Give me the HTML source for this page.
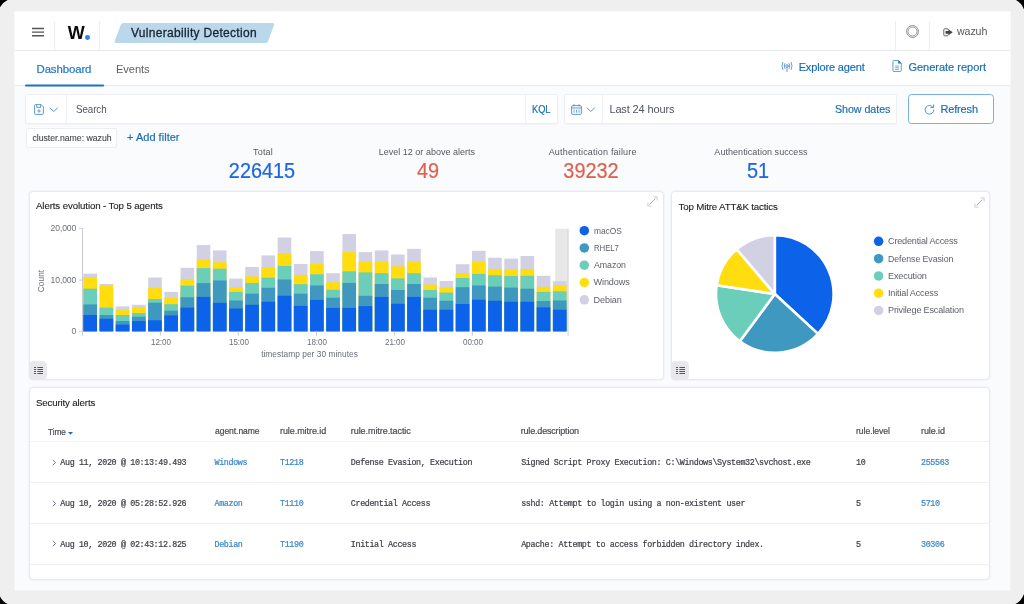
<!DOCTYPE html>
<html><head><meta charset="utf-8"><title>Wazuh - Vulnerability Detection</title>
<style>
html,body{margin:0;padding:0;background:#000;}
body{width:1024px;height:604px;position:relative;overflow:hidden;font-family:"Liberation Sans",sans-serif;}
.frame{position:absolute;left:0;top:0;width:1024px;height:604px;background:#efefef;overflow:hidden;will-change:transform;}
.t{position:absolute;white-space:nowrap;height:20px;}
.abs{position:absolute;}
.panel{position:absolute;background:#fff;border:1px solid #e7eaf2;border-radius:4px;box-sizing:border-box;box-shadow:0 0 0 1px #f2f4f9;}
.box{position:absolute;background:#fff;border:1px solid #edeff4;box-shadow:0 1px 1px rgba(150,160,190,0.08);box-sizing:border-box;border-radius:2px;}
svg{position:absolute;overflow:visible;}
</style></head><body>
<div class="frame">

<svg style="left:0;top:0" width="1024" height="604"><rect x="14.5" y="11.5" width="995.9" height="579.1" fill="#fafbfd"/><rect x="14.5" y="11.5" width="995.9" height="73" fill="#fff"/></svg>
<div class="abs" style="left:15px;top:12px;width:995px;height:578px;background:#fafbfd;"></div>
<div class="abs" style="left:15px;top:12px;width:995px;height:38px;background:#fff;border-bottom:1px solid #e8e9ec;"></div>
<div class="abs" style="left:15px;top:51px;width:995px;height:34px;background:#fff;border-bottom:1px solid #e9eaec;"></div>
<div class="abs" style="left:53.7px;top:21px;width:1px;height:29px;background:#edeef2;"></div>
<div class="abs" style="left:98.8px;top:21px;width:1px;height:29px;background:#edeef2;"></div>
<div class="abs" style="left:894.8px;top:21px;width:1px;height:29px;background:#edeef2;"></div>
<div class="abs" style="left:929px;top:21px;width:1px;height:29px;background:#edeef2;"></div>
<svg style="left:32px;top:27px" width="12" height="10" viewBox="0 0 12 10"><path d="M0 1.5H12M0 5.1H12M0 8.7H12" stroke="#555" stroke-width="1.45" fill="none"/></svg>
<div class="t" style="left:67.7px;top:22.50px;font:700 18px/20px 'Liberation Sans', sans-serif;color:#0a0a0a;">W</div>
<div class="abs" style="left:85.2px;top:35.1px;width:4.8px;height:4.8px;border-radius:50%;background:#2f7df6;"></div>
<svg style="left:114px;top:22.7px" width="162" height="20" viewBox="0 0 162 20"><path d="M6.9 1.5Q7.4 0 9.2 0H158.4Q160.8 0 160 2.2L154 18.5Q153.4 20 151.6 20H2.4Q0 20 0.8 17.8Z" fill="#b9d8ec"/></svg>
<div class="t" style="left:131px;top:23.00px;font:400 12px/20px 'Liberation Sans', sans-serif;color:#1b2430;-webkit-text-stroke:0.3px #1b2430;letter-spacing:0.302px;">Vulnerability Detection</div>
<svg style="left:905.5px;top:25.1px" width="13" height="13" viewBox="0 0 13 13"><circle cx="6.5" cy="6.5" r="5.9" fill="none" stroke="#6a6a6a" stroke-width="0.75"/><circle cx="6.5" cy="6.5" r="4.5" fill="none" stroke="#7a7a7a" stroke-width="0.75"/></svg>
<svg style="left:943.4px;top:28.4px" width="10" height="9" viewBox="0 0 10 9"><path d="M5.2 2.2V1.7Q5.2 0.8 4.3 0.8H1.7Q0.8 0.8 0.8 1.7V6.9Q0.8 7.8 1.7 7.8H4.3Q5.2 7.8 5.2 6.9V6.4" fill="none" stroke="#666" stroke-width="1"/><path d="M2.5 2.9H5.5V1.3L9.7 4.3L5.5 7.3V5.7H2.5Z" fill="#454545"/></svg>
<div class="t" style="left:956.8px;top:21.30px;font:400 11px/20px 'Liberation Sans', sans-serif;color:#555;transform:scaleX(0.9626);transform-origin:0 50%;letter-spacing:-0.080px;">wazuh</div>
<div class="t" style="left:36.5px;top:58.50px;font:400 11.4px/20px 'Liberation Sans', sans-serif;color:#1a75c6;-webkit-text-stroke:0.18px;letter-spacing:-0.096px;">Dashboard</div>
<svg style="left:0;top:0" width="1024" height="604"><rect x="25" y="84.5" width="79.2" height="2.1" rx="1" fill="#1c74bd"/></svg>
<div class="t" style="left:115.8px;top:58.50px;font:400 11.4px/20px 'Liberation Sans', sans-serif;color:#5e5f62;transform:scaleX(0.9782);transform-origin:0 50%;letter-spacing:-0.080px;">Events</div>
<svg style="left:781px;top:61px" width="12" height="12" viewBox="0 0 12 12" fill="none" stroke="#4c8fcb" stroke-width="0.85" stroke-linecap="round"><circle cx="6" cy="5" r="1.3"/><path d="M6 6.4V10.6"/><path d="M3.8 2.6Q2.6 5 3.8 7.4M8.2 2.6Q9.4 5 8.2 7.4"/><path d="M1.8 1.4Q0 5 1.8 8.6M10.2 1.4Q12 5 10.2 8.6"/></svg>
<div class="t" style="left:798.7px;top:57.00px;font:400 11px/20px 'Liberation Sans', sans-serif;color:#1a6db5;-webkit-text-stroke:0.18px;letter-spacing:-0.157px;">Explore agent</div>
<svg style="left:891.8px;top:60.3px" width="10.2" height="12" viewBox="0 0 11 13" fill="none" stroke="#4c8fcb" stroke-width="0.95"><path d="M1 1.4Q1 0.6 1.8 0.6H7L10 3.6V11.6Q10 12.4 9.2 12.4H1.8Q1 12.4 1 11.6Z"/><path d="M7 0.6V3.6H10Z" fill="#1a6db5" stroke="#1a6db5" stroke-width="0.5"/><path d="M3.4 6.6H7.6M3.4 8.4H7.6M3.4 10.2H7.6" stroke-width="0.8"/></svg>
<div class="t" style="left:908.4px;top:57.00px;font:400 11px/20px 'Liberation Sans', sans-serif;color:#1a6db5;-webkit-text-stroke:0.18px;letter-spacing:-0.004px;">Generate report</div>
<div class="box" style="left:25px;top:94px;width:532.5px;height:29.5px;"></div>
<div class="abs" style="left:66px;top:95px;width:1px;height:27.5px;background:#eef0f4;"></div>
<div class="abs" style="left:525px;top:95px;width:1px;height:27.5px;background:#eef0f4;"></div>
<svg style="left:34.4px;top:104.2px" width="10" height="11" viewBox="0 0 10 11" fill="none" stroke="#4c8fcb" stroke-width="0.9"><path d="M1.4 0.6H7.2L9.4 2.8V9.6Q9.4 10.4 8.6 10.4H1.4Q0.6 10.4 0.6 9.6V1.4Q0.6 0.6 1.4 0.6Z"/><path d="M2.8 0.8V3.4H6.6V0.8"/><circle cx="5" cy="7" r="1.1"/></svg>
<svg style="left:49px;top:107.4px" width="9.4" height="5.6" viewBox="0 0 10 6" fill="none" stroke="#4c8fcb" stroke-width="1"><path d="M0.6 0.8L5 4.8L9.4 0.8"/></svg>
<div class="t" style="left:75.6px;top:99.00px;font:400 10.8px/20px 'Liberation Sans', sans-serif;color:#50545b;transform:scaleX(0.9048);transform-origin:0 50%;letter-spacing:-0.080px;">Search</div>
<div class="t" style="left:532px;top:99.20px;font:400 11px/20px 'Liberation Sans', sans-serif;color:#1a6db5;-webkit-text-stroke:0.2px;transform:scaleX(0.84);transform-origin:0 50%;">KQL</div>
<div class="box" style="left:564px;top:94px;width:333px;height:29.5px;"></div>
<div class="abs" style="left:602px;top:95px;width:1px;height:27.5px;background:#eef0f4;"></div>
<svg style="left:571px;top:103.7px" width="11" height="11" viewBox="0 0 11 11" fill="none" stroke="#4c8fcb" stroke-width="0.9"><rect x="0.6" y="1.6" width="9.8" height="8.8" rx="1.2"/><path d="M0.6 4H10.4"/><path d="M3 0.2V2.4M8 0.2V2.4"/><path d="M3 5.6V8.8M5.5 5.6V8.8M8 5.6V8.8" stroke-width="0.8"/></svg>
<svg style="left:586px;top:107.4px" width="9.4" height="5.6" viewBox="0 0 10 6" fill="none" stroke="#4c8fcb" stroke-width="1"><path d="M0.6 0.8L5 4.8L9.4 0.8"/></svg>
<div class="t" style="left:609.4px;top:99.00px;font:400 11px/20px 'Liberation Sans', sans-serif;color:#50545b;letter-spacing:-0.130px;">Last 24 hours</div>
<div class="t" style="left:834.6px;top:99.00px;font:400 11px/20px 'Liberation Sans', sans-serif;color:#1a6db5;-webkit-text-stroke:0.18px;transform:scaleX(0.9760);transform-origin:0 50%;letter-spacing:-0.080px;">Show dates</div>
<div class="abs" style="left:908px;top:94px;width:85.5px;height:29.5px;box-sizing:border-box;border:1px solid #79b0dd;border-radius:3.5px;background:#fff;"></div>
<svg style="left:924px;top:103.5px" width="11" height="11" viewBox="0 0 11 11" fill="none" stroke="#4c8fcb" stroke-width="0.95" stroke-linecap="round"><path d="M9.2 3.4A4.4 4.4 0 1 0 9.9 5.8"/><path d="M9.6 0.8V3.6H6.8"/></svg>
<div class="t" style="left:940.5px;top:99.00px;font:400 11px/20px 'Liberation Sans', sans-serif;color:#1a6db5;-webkit-text-stroke:0.18px;letter-spacing:-0.170px;">Refresh</div>
<div class="abs" style="left:26px;top:127.5px;width:90.5px;height:20px;box-sizing:border-box;border:1px solid #eceef3;border-radius:2px;background:#fff;"></div>
<div class="t" style="left:32.4px;top:127.50px;font:400 8.7px/20px 'Liberation Sans', sans-serif;color:#45494f;-webkit-text-stroke:0.12px;letter-spacing:-0.000px;">cluster.name: wazuh</div>
<div class="t" style="left:127px;top:126.80px;font:400 11px/20px 'Liberation Sans', sans-serif;color:#1a6db5;-webkit-text-stroke:0.18px;letter-spacing:0.020px;">+ Add filter</div>
<div class="t" style="left:112.89999999999998px;width:300px;text-align:center;top:142.00px;font:400 9px/20px 'Liberation Sans', sans-serif;color:#55595f;letter-spacing:0.172px;text-indent:0.172px;">Total</div>
<div class="t" style="left:112.19999999999999px;width:300px;text-align:center;top:156.45px;height:30px;font:400 21.6px/30px 'Liberation Sans',sans-serif;color:#1f66e6;transform:scaleX(0.92);-webkit-text-stroke:0.22px #1f66e6;">226415</div>
<div class="t" style="left:276.9px;width:300px;text-align:center;top:142.00px;font:400 9px/20px 'Liberation Sans', sans-serif;color:#55595f;letter-spacing:0.006px;text-indent:0.006px;">Level 12 or above alerts</div>
<div class="t" style="left:277.5px;width:300px;text-align:center;top:156.45px;height:30px;font:400 21.6px/30px 'Liberation Sans',sans-serif;color:#e0604f;transform:scaleX(0.92);-webkit-text-stroke:0.22px #e0604f;">49</div>
<div class="t" style="left:442.6px;width:300px;text-align:center;top:142.00px;font:400 9px/20px 'Liberation Sans', sans-serif;color:#55595f;letter-spacing:0.178px;text-indent:0.178px;">Authentication failure</div>
<div class="t" style="left:441px;width:300px;text-align:center;top:156.45px;height:30px;font:400 21.6px/30px 'Liberation Sans',sans-serif;color:#e0604f;transform:scaleX(0.92);-webkit-text-stroke:0.22px #e0604f;">39232</div>
<div class="t" style="left:610.9px;width:300px;text-align:center;top:142.00px;font:400 9px/20px 'Liberation Sans', sans-serif;color:#55595f;letter-spacing:0.050px;text-indent:0.050px;">Authentication success</div>
<div class="t" style="left:607.5px;width:300px;text-align:center;top:156.45px;height:30px;font:400 21.6px/30px 'Liberation Sans',sans-serif;color:#1f66e6;transform:scaleX(0.92);-webkit-text-stroke:0.22px #1f66e6;">51</div>
<div class="panel" style="left:29px;top:190.5px;width:635px;height:189px;"></div>
<div class="panel" style="left:670.5px;top:190.5px;width:319.5px;height:189px;"></div>
<div class="panel" style="left:29px;top:386.5px;width:961px;height:193px;"></div>
<div class="t" style="left:36px;top:196.40px;font:400 9.7px/20px 'Liberation Sans', sans-serif;color:#1c1e22;-webkit-text-stroke:0.12px #1c1e22;letter-spacing:-0.110px;">Alerts evolution - Top 5 agents</div>
<div class="t" style="left:678.6px;top:196.90px;font:400 9.7px/20px 'Liberation Sans', sans-serif;color:#1c1e22;-webkit-text-stroke:0.12px #1c1e22;letter-spacing:-0.153px;">Top Mitre ATT&amp;K tactics</div>
<div class="t" style="left:36px;top:393.20px;font:400 9.7px/20px 'Liberation Sans', sans-serif;color:#1c1e22;-webkit-text-stroke:0.12px #1c1e22;letter-spacing:-0.147px;">Security alerts</div>
<svg style="left:647.3px;top:196px" width="11" height="11" viewBox="0 0 11 11" fill="none"><path d="M2.6 8.4L8.4 2.6" stroke="#9b9ea6" stroke-width="0.9"/><path d="M6.6 0.9H10.1V4.4M0.9 6.6V10.1H4.4" stroke="#c0c3ca" stroke-width="0.85"/></svg>
<svg style="left:974px;top:197.4px" width="11" height="11" viewBox="0 0 11 11" fill="none"><path d="M2.6 8.4L8.4 2.6" stroke="#9b9ea6" stroke-width="0.9"/><path d="M6.6 0.9H10.1V4.4M0.9 6.6V10.1H4.4" stroke="#c0c3ca" stroke-width="0.85"/></svg>
<div class="abs" style="left:29.1px;top:361.3px;width:18px;height:18.4px;background:#e9e9eb;border-radius:4.5px;"></div>
<svg style="left:34px;top:367px" width="9" height="8" viewBox="0 0 9 8"><path d="M0 0.5H2M3.4 0.5H9M0 2.5H2M3.4 2.5H9M0 4.5H2M3.4 4.5H9M0 6.5H2M3.4 6.5H9" stroke="#55555a" stroke-width="1" fill="none"/></svg>
<div class="abs" style="left:671.1px;top:361.3px;width:18px;height:18.4px;background:#e9e9eb;border-radius:4.5px;"></div>
<svg style="left:676px;top:367px" width="9" height="8" viewBox="0 0 9 8"><path d="M0 0.5H2M3.4 0.5H9M0 2.5H2M3.4 2.5H9M0 4.5H2M3.4 4.5H9M0 6.5H2M3.4 6.5H9" stroke="#55555a" stroke-width="1" fill="none"/></svg>
<svg style="left:0;top:0" width="1024" height="604" viewBox="0 0 1024 604" shape-rendering="auto"><rect x="555.2" y="228.8" width="12.6" height="102.5" fill="#e7e7e7"/><rect x="567.6" y="228.8" width="0.9" height="107" fill="#c9c9cd"/><rect x="83.40" y="273.60" width="13.6" height="57.70" fill="#d1d1e3"/><rect x="83.40" y="277.50" width="13.6" height="53.80" fill="#ffdd0f"/><rect x="83.40" y="288.70" width="13.6" height="42.60" fill="#6bceba"/><rect x="83.40" y="304.40" width="13.6" height="26.90" fill="#3f98bf"/><rect x="83.40" y="315.00" width="13.6" height="16.30" fill="#0d62ea"/><rect x="99.59" y="284.00" width="13.6" height="47.30" fill="#d1d1e3"/><rect x="99.59" y="285.50" width="13.6" height="45.80" fill="#ffdd0f"/><rect x="99.59" y="307.60" width="13.6" height="23.70" fill="#6bceba"/><rect x="99.59" y="315.00" width="13.6" height="16.30" fill="#3f98bf"/><rect x="99.59" y="318.80" width="13.6" height="12.50" fill="#0d62ea"/><rect x="115.78" y="306.40" width="13.6" height="24.90" fill="#d1d1e3"/><rect x="115.78" y="310.20" width="13.6" height="21.10" fill="#ffdd0f"/><rect x="115.78" y="315.00" width="13.6" height="16.30" fill="#6bceba"/><rect x="115.78" y="321.00" width="13.6" height="10.30" fill="#3f98bf"/><rect x="115.78" y="324.60" width="13.6" height="6.70" fill="#0d62ea"/><rect x="131.97" y="304.80" width="13.6" height="26.50" fill="#d1d1e3"/><rect x="131.97" y="307.20" width="13.6" height="24.10" fill="#ffdd0f"/><rect x="131.97" y="313.00" width="13.6" height="18.30" fill="#6bceba"/><rect x="131.97" y="316.70" width="13.6" height="14.60" fill="#3f98bf"/><rect x="131.97" y="321.00" width="13.6" height="10.30" fill="#0d62ea"/><rect x="148.16" y="277.50" width="13.6" height="53.80" fill="#d1d1e3"/><rect x="148.16" y="288.10" width="13.6" height="43.20" fill="#ffdd0f"/><rect x="148.16" y="299.00" width="13.6" height="32.30" fill="#6bceba"/><rect x="148.16" y="302.70" width="13.6" height="28.60" fill="#3f98bf"/><rect x="148.16" y="320.30" width="13.6" height="11.00" fill="#0d62ea"/><rect x="164.35" y="291.90" width="13.6" height="39.40" fill="#d1d1e3"/><rect x="164.35" y="297.70" width="13.6" height="33.60" fill="#ffdd0f"/><rect x="164.35" y="304.20" width="13.6" height="27.10" fill="#6bceba"/><rect x="164.35" y="310.70" width="13.6" height="20.60" fill="#3f98bf"/><rect x="164.35" y="315.40" width="13.6" height="15.90" fill="#0d62ea"/><rect x="180.54" y="267.80" width="13.6" height="63.50" fill="#d1d1e3"/><rect x="180.54" y="279.20" width="13.6" height="52.10" fill="#ffdd0f"/><rect x="180.54" y="285.70" width="13.6" height="45.60" fill="#6bceba"/><rect x="180.54" y="297.30" width="13.6" height="34.00" fill="#3f98bf"/><rect x="180.54" y="307.60" width="13.6" height="23.70" fill="#0d62ea"/><rect x="196.73" y="245.00" width="13.6" height="86.30" fill="#d1d1e3"/><rect x="196.73" y="259.90" width="13.6" height="71.40" fill="#ffdd0f"/><rect x="196.73" y="268.10" width="13.6" height="63.20" fill="#6bceba"/><rect x="196.73" y="283.10" width="13.6" height="48.20" fill="#3f98bf"/><rect x="196.73" y="296.90" width="13.6" height="34.40" fill="#0d62ea"/><rect x="212.92" y="250.40" width="13.6" height="80.90" fill="#d1d1e3"/><rect x="212.92" y="262.20" width="13.6" height="69.10" fill="#ffdd0f"/><rect x="212.92" y="268.70" width="13.6" height="62.60" fill="#6bceba"/><rect x="212.92" y="280.50" width="13.6" height="50.80" fill="#3f98bf"/><rect x="212.92" y="302.90" width="13.6" height="28.40" fill="#0d62ea"/><rect x="229.11" y="278.60" width="13.6" height="52.70" fill="#d1d1e3"/><rect x="229.11" y="287.60" width="13.6" height="43.70" fill="#ffdd0f"/><rect x="229.11" y="291.90" width="13.6" height="39.40" fill="#6bceba"/><rect x="229.11" y="300.50" width="13.6" height="30.80" fill="#3f98bf"/><rect x="229.11" y="308.50" width="13.6" height="22.80" fill="#0d62ea"/><rect x="245.30" y="267.00" width="13.6" height="64.30" fill="#d1d1e3"/><rect x="245.30" y="276.40" width="13.6" height="54.90" fill="#ffdd0f"/><rect x="245.30" y="282.90" width="13.6" height="48.40" fill="#6bceba"/><rect x="245.30" y="293.70" width="13.6" height="37.60" fill="#3f98bf"/><rect x="245.30" y="304.80" width="13.6" height="26.50" fill="#0d62ea"/><rect x="261.49" y="255.40" width="13.6" height="75.90" fill="#d1d1e3"/><rect x="261.49" y="267.60" width="13.6" height="63.70" fill="#ffdd0f"/><rect x="261.49" y="277.70" width="13.6" height="53.60" fill="#6bceba"/><rect x="261.49" y="287.80" width="13.6" height="43.50" fill="#3f98bf"/><rect x="261.49" y="301.80" width="13.6" height="29.50" fill="#0d62ea"/><rect x="277.68" y="237.50" width="13.6" height="93.80" fill="#d1d1e3"/><rect x="277.68" y="253.20" width="13.6" height="78.10" fill="#ffdd0f"/><rect x="277.68" y="265.90" width="13.6" height="65.40" fill="#6bceba"/><rect x="277.68" y="279.50" width="13.6" height="51.80" fill="#3f98bf"/><rect x="277.68" y="295.80" width="13.6" height="35.50" fill="#0d62ea"/><rect x="293.87" y="264.00" width="13.6" height="67.30" fill="#d1d1e3"/><rect x="293.87" y="274.90" width="13.6" height="56.40" fill="#ffdd0f"/><rect x="293.87" y="284.20" width="13.6" height="47.10" fill="#6bceba"/><rect x="293.87" y="293.70" width="13.6" height="37.60" fill="#3f98bf"/><rect x="293.87" y="305.90" width="13.6" height="25.40" fill="#0d62ea"/><rect x="310.06" y="251.10" width="13.6" height="80.20" fill="#d1d1e3"/><rect x="310.06" y="263.70" width="13.6" height="67.60" fill="#ffdd0f"/><rect x="310.06" y="274.30" width="13.6" height="57.00" fill="#6bceba"/><rect x="310.06" y="285.50" width="13.6" height="45.80" fill="#3f98bf"/><rect x="310.06" y="299.90" width="13.6" height="31.40" fill="#0d62ea"/><rect x="326.25" y="273.20" width="13.6" height="58.10" fill="#d1d1e3"/><rect x="326.25" y="282.30" width="13.6" height="49.00" fill="#ffdd0f"/><rect x="326.25" y="289.80" width="13.6" height="41.50" fill="#6bceba"/><rect x="326.25" y="297.70" width="13.6" height="33.60" fill="#3f98bf"/><rect x="326.25" y="307.90" width="13.6" height="23.40" fill="#0d62ea"/><rect x="342.44" y="234.10" width="13.6" height="97.20" fill="#d1d1e3"/><rect x="342.44" y="252.10" width="13.6" height="79.20" fill="#ffdd0f"/><rect x="342.44" y="271.30" width="13.6" height="60.00" fill="#6bceba"/><rect x="342.44" y="282.90" width="13.6" height="48.40" fill="#3f98bf"/><rect x="342.44" y="307.90" width="13.6" height="23.40" fill="#0d62ea"/><rect x="358.63" y="252.10" width="13.6" height="79.20" fill="#d1d1e3"/><rect x="358.63" y="261.80" width="13.6" height="69.50" fill="#ffdd0f"/><rect x="358.63" y="272.40" width="13.6" height="58.90" fill="#6bceba"/><rect x="358.63" y="295.80" width="13.6" height="35.50" fill="#3f98bf"/><rect x="358.63" y="306.10" width="13.6" height="25.20" fill="#0d62ea"/><rect x="374.82" y="250.40" width="13.6" height="80.90" fill="#d1d1e3"/><rect x="374.82" y="261.80" width="13.6" height="69.50" fill="#ffdd0f"/><rect x="374.82" y="273.20" width="13.6" height="58.10" fill="#6bceba"/><rect x="374.82" y="284.00" width="13.6" height="47.30" fill="#3f98bf"/><rect x="374.82" y="296.90" width="13.6" height="34.40" fill="#0d62ea"/><rect x="391.01" y="254.50" width="13.6" height="76.80" fill="#d1d1e3"/><rect x="391.01" y="266.30" width="13.6" height="65.00" fill="#ffdd0f"/><rect x="391.01" y="278.40" width="13.6" height="52.90" fill="#6bceba"/><rect x="391.01" y="290.00" width="13.6" height="41.30" fill="#3f98bf"/><rect x="391.01" y="303.80" width="13.6" height="27.50" fill="#0d62ea"/><rect x="407.20" y="248.90" width="13.6" height="82.40" fill="#d1d1e3"/><rect x="407.20" y="261.80" width="13.6" height="69.50" fill="#ffdd0f"/><rect x="407.20" y="273.20" width="13.6" height="58.10" fill="#6bceba"/><rect x="407.20" y="284.00" width="13.6" height="47.30" fill="#3f98bf"/><rect x="407.20" y="296.90" width="13.6" height="34.40" fill="#0d62ea"/><rect x="423.39" y="277.50" width="13.6" height="53.80" fill="#d1d1e3"/><rect x="423.39" y="284.60" width="13.6" height="46.70" fill="#ffdd0f"/><rect x="423.39" y="290.00" width="13.6" height="41.30" fill="#6bceba"/><rect x="423.39" y="297.70" width="13.6" height="33.60" fill="#3f98bf"/><rect x="423.39" y="309.80" width="13.6" height="21.50" fill="#0d62ea"/><rect x="439.58" y="281.00" width="13.6" height="50.30" fill="#d1d1e3"/><rect x="439.58" y="287.40" width="13.6" height="43.90" fill="#ffdd0f"/><rect x="439.58" y="292.60" width="13.6" height="38.70" fill="#6bceba"/><rect x="439.58" y="300.80" width="13.6" height="30.50" fill="#3f98bf"/><rect x="439.58" y="309.80" width="13.6" height="21.50" fill="#0d62ea"/><rect x="455.77" y="264.20" width="13.6" height="67.10" fill="#d1d1e3"/><rect x="455.77" y="273.00" width="13.6" height="58.30" fill="#ffdd0f"/><rect x="455.77" y="278.00" width="13.6" height="53.30" fill="#6bceba"/><rect x="455.77" y="287.20" width="13.6" height="44.10" fill="#3f98bf"/><rect x="455.77" y="304.00" width="13.6" height="27.30" fill="#0d62ea"/><rect x="471.96" y="250.80" width="13.6" height="80.50" fill="#d1d1e3"/><rect x="471.96" y="261.80" width="13.6" height="69.50" fill="#ffdd0f"/><rect x="471.96" y="273.90" width="13.6" height="57.40" fill="#6bceba"/><rect x="471.96" y="285.50" width="13.6" height="45.80" fill="#3f98bf"/><rect x="471.96" y="299.70" width="13.6" height="31.60" fill="#0d62ea"/><rect x="488.15" y="257.70" width="13.6" height="73.60" fill="#d1d1e3"/><rect x="488.15" y="268.90" width="13.6" height="62.40" fill="#ffdd0f"/><rect x="488.15" y="275.20" width="13.6" height="56.10" fill="#6bceba"/><rect x="488.15" y="286.60" width="13.6" height="44.70" fill="#3f98bf"/><rect x="488.15" y="300.80" width="13.6" height="30.50" fill="#0d62ea"/><rect x="504.34" y="258.60" width="13.6" height="72.70" fill="#d1d1e3"/><rect x="504.34" y="269.80" width="13.6" height="61.50" fill="#ffdd0f"/><rect x="504.34" y="276.00" width="13.6" height="55.30" fill="#6bceba"/><rect x="504.34" y="287.60" width="13.6" height="43.70" fill="#3f98bf"/><rect x="504.34" y="301.80" width="13.6" height="29.50" fill="#0d62ea"/><rect x="520.53" y="256.00" width="13.6" height="75.30" fill="#d1d1e3"/><rect x="520.53" y="268.90" width="13.6" height="62.40" fill="#ffdd0f"/><rect x="520.53" y="275.80" width="13.6" height="55.50" fill="#6bceba"/><rect x="520.53" y="288.70" width="13.6" height="42.60" fill="#3f98bf"/><rect x="520.53" y="301.80" width="13.6" height="29.50" fill="#0d62ea"/><rect x="536.72" y="275.80" width="13.6" height="55.50" fill="#d1d1e3"/><rect x="536.72" y="286.80" width="13.6" height="44.50" fill="#ffdd0f"/><rect x="536.72" y="291.90" width="13.6" height="39.40" fill="#6bceba"/><rect x="536.72" y="301.00" width="13.6" height="30.30" fill="#3f98bf"/><rect x="536.72" y="307.40" width="13.6" height="23.90" fill="#0d62ea"/><rect x="552.91" y="281.20" width="13.6" height="50.10" fill="#d1d1e3"/><rect x="552.91" y="285.10" width="13.6" height="46.20" fill="#ffdd0f"/><rect x="552.91" y="291.30" width="13.6" height="40.00" fill="#6bceba"/><rect x="552.91" y="300.50" width="13.6" height="30.80" fill="#3f98bf"/><rect x="552.91" y="309.80" width="13.6" height="21.50" fill="#0d62ea"/><path d="M82.5 228V335.6" stroke="#c4c6cc" stroke-width="0.9" fill="none"/><path d="M79 228.4H82.5M79 280.1H82.5M79 331.3H82.5" stroke="#c4c6cc" stroke-width="0.9" fill="none"/><path d="M160.4 331.3V335.8" stroke="#c4c6cc" stroke-width="0.9" fill="none"/><path d="M238.3 331.3V335.8" stroke="#c4c6cc" stroke-width="0.9" fill="none"/><path d="M316.5 331.3V335.8" stroke="#c4c6cc" stroke-width="0.9" fill="none"/><path d="M394.4 331.3V335.8" stroke="#c4c6cc" stroke-width="0.9" fill="none"/><path d="M472.4 331.3V335.8" stroke="#c4c6cc" stroke-width="0.9" fill="none"/></svg>
<div class="t" style="right:947.7px;top:218.40px;font:400 8.6px/20px 'Liberation Sans', sans-serif;color:#6a6f78;letter-spacing:-0.101px;margin-right:0.101px;">20,000</div>
<div class="t" style="right:947.7px;top:270.10px;font:400 8.6px/20px 'Liberation Sans', sans-serif;color:#6a6f78;letter-spacing:-0.101px;margin-right:0.101px;">10,000</div>
<div class="t" style="right:947.7px;top:320.80px;font:400 8.6px/20px 'Liberation Sans', sans-serif;color:#6a6f78;">0</div>
<div class="t" style="left:10.599999999999994px;width:300px;text-align:center;top:331.80px;font:400 8.4px/20px 'Liberation Sans', sans-serif;color:#6a6f78;transform:scaleX(0.9613);transform-origin:50% 50%;letter-spacing:-0.080px;text-indent:-0.080px;">12:00</div>
<div class="t" style="left:88.5px;width:300px;text-align:center;top:331.80px;font:400 8.4px/20px 'Liberation Sans', sans-serif;color:#6a6f78;transform:scaleX(0.9613);transform-origin:50% 50%;letter-spacing:-0.080px;text-indent:-0.080px;">15:00</div>
<div class="t" style="left:166.7px;width:300px;text-align:center;top:331.80px;font:400 8.4px/20px 'Liberation Sans', sans-serif;color:#6a6f78;transform:scaleX(0.9613);transform-origin:50% 50%;letter-spacing:-0.080px;text-indent:-0.080px;">18:00</div>
<div class="t" style="left:244.60000000000002px;width:300px;text-align:center;top:331.80px;font:400 8.4px/20px 'Liberation Sans', sans-serif;color:#6a6f78;transform:scaleX(0.9613);transform-origin:50% 50%;letter-spacing:-0.080px;text-indent:-0.080px;">21:00</div>
<div class="t" style="left:322.6px;width:300px;text-align:center;top:331.80px;font:400 8.4px/20px 'Liberation Sans', sans-serif;color:#6a6f78;transform:scaleX(0.9613);transform-origin:50% 50%;letter-spacing:-0.080px;text-indent:-0.080px;">00:00</div>
<div class="t" style="left:159.5px;width:300px;text-align:center;top:344.00px;font:400 8.4px/20px 'Liberation Sans', sans-serif;color:#6a6f78;letter-spacing:0.016px;text-indent:0.016px;">timestamp per 30 minutes</div>
<div class="t" style="left:-9.5px;width:100px;text-align:center;top:271px;font:400 8.4px/20px 'Liberation Sans',sans-serif;color:#6a6f78;transform:rotate(-90deg);">Count</div>
<svg style="left:0;top:0" width="1024" height="604"><circle cx="584.3" cy="230.65" r="4.75" fill="#0d62ea"/></svg>
<div class="t" style="left:593.5px;top:220.55px;font:400 9.1px/20px 'Liberation Sans', sans-serif;color:#5b5f67;transform:scaleX(0.9261);transform-origin:0 50%;letter-spacing:-0.080px;">macOS</div>
<svg style="left:0;top:0" width="1024" height="604"><circle cx="584.3" cy="247.93" r="4.75" fill="#3f98bf"/></svg>
<div class="t" style="left:593.5px;top:237.83px;font:400 9.1px/20px 'Liberation Sans', sans-serif;color:#5b5f67;transform:scaleX(0.8581);transform-origin:0 50%;letter-spacing:-0.080px;">RHEL7</div>
<svg style="left:0;top:0" width="1024" height="604"><circle cx="584.3" cy="265.21" r="4.75" fill="#6bceba"/></svg>
<div class="t" style="left:593.5px;top:255.11px;font:400 9.1px/20px 'Liberation Sans', sans-serif;color:#5b5f67;transform:scaleX(0.9702);transform-origin:0 50%;letter-spacing:-0.080px;">Amazon</div>
<svg style="left:0;top:0" width="1024" height="604"><circle cx="584.3" cy="282.49" r="4.75" fill="#ffdd0f"/></svg>
<div class="t" style="left:593.5px;top:272.39px;font:400 9.1px/20px 'Liberation Sans', sans-serif;color:#5b5f67;letter-spacing:-0.103px;">Windows</div>
<svg style="left:0;top:0" width="1024" height="604"><circle cx="584.3" cy="299.77" r="4.75" fill="#d1d1e3"/></svg>
<div class="t" style="left:593.5px;top:289.67px;font:400 9.1px/20px 'Liberation Sans', sans-serif;color:#5b5f67;letter-spacing:-0.088px;">Debian</div>
<svg style="left:0;top:0" width="1024" height="604" viewBox="0 0 1024 604"><path d="M774.8 294.0L774.80 235.20A58.8 58.8 0 0 1 818.01 333.88Z" fill="#0d62ea" stroke="#fff" stroke-width="2.6" stroke-linejoin="round"/><path d="M774.8 294.0L818.01 333.88A58.8 58.8 0 0 1 739.82 341.27Z" fill="#3f98bf" stroke="#fff" stroke-width="2.6" stroke-linejoin="round"/><path d="M774.8 294.0L739.82 341.27A58.8 58.8 0 0 1 716.65 285.31Z" fill="#6bceba" stroke="#fff" stroke-width="2.6" stroke-linejoin="round"/><path d="M774.8 294.0L716.65 285.31A58.8 58.8 0 0 1 736.69 249.22Z" fill="#ffdd0f" stroke="#fff" stroke-width="2.6" stroke-linejoin="round"/><path d="M774.8 294.0L736.69 249.22A58.8 58.8 0 0 1 774.80 235.20Z" fill="#d1d1e3" stroke="#fff" stroke-width="2.6" stroke-linejoin="round"/></svg>
<svg style="left:0;top:0" width="1024" height="604"><circle cx="878.6" cy="241.35" r="4.75" fill="#0d62ea"/></svg>
<div class="t" style="left:888px;top:231.25px;font:400 9.1px/20px 'Liberation Sans', sans-serif;color:#5b5f67;letter-spacing:-0.184px;">Credential Access</div>
<svg style="left:0;top:0" width="1024" height="604"><circle cx="878.6" cy="258.63" r="4.75" fill="#3f98bf"/></svg>
<div class="t" style="left:888px;top:248.53px;font:400 9.1px/20px 'Liberation Sans', sans-serif;color:#5b5f67;transform:scaleX(0.9663);transform-origin:0 50%;letter-spacing:-0.080px;">Defense Evasion</div>
<svg style="left:0;top:0" width="1024" height="604"><circle cx="878.6" cy="275.91" r="4.75" fill="#6bceba"/></svg>
<div class="t" style="left:888px;top:265.81px;font:400 9.1px/20px 'Liberation Sans', sans-serif;color:#5b5f67;letter-spacing:-0.133px;">Execution</div>
<svg style="left:0;top:0" width="1024" height="604"><circle cx="878.6" cy="293.19" r="4.75" fill="#ffdd0f"/></svg>
<div class="t" style="left:888px;top:283.09px;font:400 9.1px/20px 'Liberation Sans', sans-serif;color:#5b5f67;letter-spacing:-0.177px;">Initial Access</div>
<svg style="left:0;top:0" width="1024" height="604"><circle cx="878.6" cy="310.47" r="4.75" fill="#d1d1e3"/></svg>
<div class="t" style="left:888px;top:300.37px;font:400 9.1px/20px 'Liberation Sans', sans-serif;color:#5b5f67;letter-spacing:-0.180px;">Privilege Escalation</div>
<div class="t" style="left:48px;top:422.30px;font:400 9px/20px 'Liberation Sans', sans-serif;color:#484b52;-webkit-text-stroke:0.2px #484b52;transform:scaleX(0.9266);transform-origin:0 50%;letter-spacing:-0.080px;">Time</div>
<svg style="left:68.3px;top:431.8px" width="5" height="3" viewBox="0 0 5 3"><path d="M0 0H5L2.5 2.8Z" fill="#1a6db5"/></svg>
<div class="t" style="left:214.5px;top:421.00px;font:400 9px/20px 'Liberation Sans', sans-serif;color:#484b52;-webkit-text-stroke:0.2px #484b52;transform:scaleX(0.9526);transform-origin:0 50%;letter-spacing:-0.080px;">agent.name</div>
<div class="t" style="left:280px;top:421.00px;font:400 9px/20px 'Liberation Sans', sans-serif;color:#484b52;-webkit-text-stroke:0.2px #484b52;letter-spacing:-0.068px;">rule.mitre.id</div>
<div class="t" style="left:350.8px;top:421.00px;font:400 9px/20px 'Liberation Sans', sans-serif;color:#484b52;-webkit-text-stroke:0.2px #484b52;letter-spacing:-0.063px;">rule.mitre.tactic</div>
<div class="t" style="left:520.7px;top:421.00px;font:400 9px/20px 'Liberation Sans', sans-serif;color:#484b52;-webkit-text-stroke:0.2px #484b52;letter-spacing:-0.176px;">rule.description</div>
<div class="t" style="left:856px;top:421.00px;font:400 9px/20px 'Liberation Sans', sans-serif;color:#484b52;-webkit-text-stroke:0.2px #484b52;transform:scaleX(0.9632);transform-origin:0 50%;letter-spacing:-0.080px;">rule.level</div>
<div class="t" style="left:921px;top:421.00px;font:400 9px/20px 'Liberation Sans', sans-serif;color:#484b52;-webkit-text-stroke:0.2px #484b52;letter-spacing:-0.102px;">rule.id</div>
<div class="abs" style="left:30px;top:440.9px;width:959px;height:1px;background:#eff1f5;"></div>
<div class="abs" style="left:30px;top:481.6px;width:959px;height:1px;background:#eff1f5;"></div>
<div class="abs" style="left:30px;top:522.6px;width:959px;height:1px;background:#eff1f5;"></div>
<div class="abs" style="left:30px;top:563.7px;width:959px;height:1px;background:#eff1f5;"></div>
<svg style="left:52.4px;top:459.10px" width="5" height="7" viewBox="0 0 5 7" fill="none" stroke="#6a7489" stroke-width="1"><path d="M0.8 0.9L3.6 3.5L0.8 6.1"/></svg>
<div class="t" style="left:60.3px;top:453.40px;font:400 8.4px/20px 'Liberation Mono', monospace;color:#3b3e45;letter-spacing:-0.361px;-webkit-text-stroke:0.2px;">Aug 11, 2020 @ 10:13:49.493</div>
<div class="t" style="left:214.5px;top:453.40px;font:400 8.4px/20px 'Liberation Mono', monospace;color:#3a86c8;letter-spacing:-0.361px;-webkit-text-stroke:0.2px;">Windows</div>
<div class="t" style="left:280px;top:453.40px;font:400 8.4px/20px 'Liberation Mono', monospace;color:#3a86c8;letter-spacing:-0.361px;-webkit-text-stroke:0.2px;">T1218</div>
<div class="t" style="left:350.8px;top:453.40px;font:400 8.4px/20px 'Liberation Mono', monospace;color:#3b3e45;letter-spacing:-0.361px;-webkit-text-stroke:0.2px;">Defense Evasion, Execution</div>
<div class="t" style="left:521.2px;top:453.40px;font:400 8.4px/20px 'Liberation Mono', monospace;color:#3b3e45;letter-spacing:-0.361px;-webkit-text-stroke:0.2px;">Signed Script Proxy Execution: C:\Windows\System32\svchost.exe</div>
<div class="t" style="left:856px;top:453.40px;font:400 8.4px/20px 'Liberation Mono', monospace;color:#3b3e45;letter-spacing:-0.361px;-webkit-text-stroke:0.2px;">10</div>
<div class="t" style="left:921px;top:453.40px;font:400 8.4px/20px 'Liberation Mono', monospace;color:#3a86c8;letter-spacing:-0.361px;-webkit-text-stroke:0.2px;">255563</div>
<svg style="left:52.4px;top:499.50px" width="5" height="7" viewBox="0 0 5 7" fill="none" stroke="#6a7489" stroke-width="1"><path d="M0.8 0.9L3.6 3.5L0.8 6.1"/></svg>
<div class="t" style="left:60.3px;top:493.80px;font:400 8.4px/20px 'Liberation Mono', monospace;color:#3b3e45;letter-spacing:-0.361px;-webkit-text-stroke:0.2px;">Aug 10, 2020 @ 05:28:52.926</div>
<div class="t" style="left:214.5px;top:493.80px;font:400 8.4px/20px 'Liberation Mono', monospace;color:#3a86c8;letter-spacing:-0.361px;-webkit-text-stroke:0.2px;">Amazon</div>
<div class="t" style="left:280px;top:493.80px;font:400 8.4px/20px 'Liberation Mono', monospace;color:#3a86c8;letter-spacing:-0.361px;-webkit-text-stroke:0.2px;">T1110</div>
<div class="t" style="left:350.8px;top:493.80px;font:400 8.4px/20px 'Liberation Mono', monospace;color:#3b3e45;letter-spacing:-0.361px;-webkit-text-stroke:0.2px;">Credential Access</div>
<div class="t" style="left:521.2px;top:493.80px;font:400 8.4px/20px 'Liberation Mono', monospace;color:#3b3e45;letter-spacing:-0.361px;-webkit-text-stroke:0.2px;">sshd: Attempt to login using a non-existent user</div>
<div class="t" style="left:856px;top:493.80px;font:400 8.4px/20px 'Liberation Mono', monospace;color:#3b3e45;letter-spacing:-0.361px;-webkit-text-stroke:0.2px;">5</div>
<div class="t" style="left:921px;top:493.80px;font:400 8.4px/20px 'Liberation Mono', monospace;color:#3a86c8;letter-spacing:-0.361px;-webkit-text-stroke:0.2px;">5710</div>
<svg style="left:52.4px;top:540.40px" width="5" height="7" viewBox="0 0 5 7" fill="none" stroke="#6a7489" stroke-width="1"><path d="M0.8 0.9L3.6 3.5L0.8 6.1"/></svg>
<div class="t" style="left:60.3px;top:534.70px;font:400 8.4px/20px 'Liberation Mono', monospace;color:#3b3e45;letter-spacing:-0.361px;-webkit-text-stroke:0.2px;">Aug 10, 2020 @ 02:43:12.825</div>
<div class="t" style="left:214.5px;top:534.70px;font:400 8.4px/20px 'Liberation Mono', monospace;color:#3a86c8;letter-spacing:-0.361px;-webkit-text-stroke:0.2px;">Debian</div>
<div class="t" style="left:280px;top:534.70px;font:400 8.4px/20px 'Liberation Mono', monospace;color:#3a86c8;letter-spacing:-0.361px;-webkit-text-stroke:0.2px;">T1190</div>
<div class="t" style="left:350.8px;top:534.70px;font:400 8.4px/20px 'Liberation Mono', monospace;color:#3b3e45;letter-spacing:-0.361px;-webkit-text-stroke:0.2px;">Initial Access</div>
<div class="t" style="left:521.2px;top:534.70px;font:400 8.4px/20px 'Liberation Mono', monospace;color:#3b3e45;letter-spacing:-0.361px;-webkit-text-stroke:0.2px;">Apache: Attempt to access forbidden directory index.</div>
<div class="t" style="left:856px;top:534.70px;font:400 8.4px/20px 'Liberation Mono', monospace;color:#3b3e45;letter-spacing:-0.361px;-webkit-text-stroke:0.2px;">5</div>
<div class="t" style="left:921px;top:534.70px;font:400 8.4px/20px 'Liberation Mono', monospace;color:#3a86c8;letter-spacing:-0.361px;-webkit-text-stroke:0.2px;">30306</div>
<svg style="left:0;top:0" width="1024" height="604" viewBox="0 0 1024 604"><path d="M0 0H7.6Q2.6 2.4 0 7.3ZM1024 0H1015.8Q1021.4 2.8 1024 9.5ZM0 604V596.5Q2.4 601.6 7.7 604ZM1024 604H1015.4Q1021.4 601 1024 593.9Z" fill="#000"/></svg>
</div></body></html>
